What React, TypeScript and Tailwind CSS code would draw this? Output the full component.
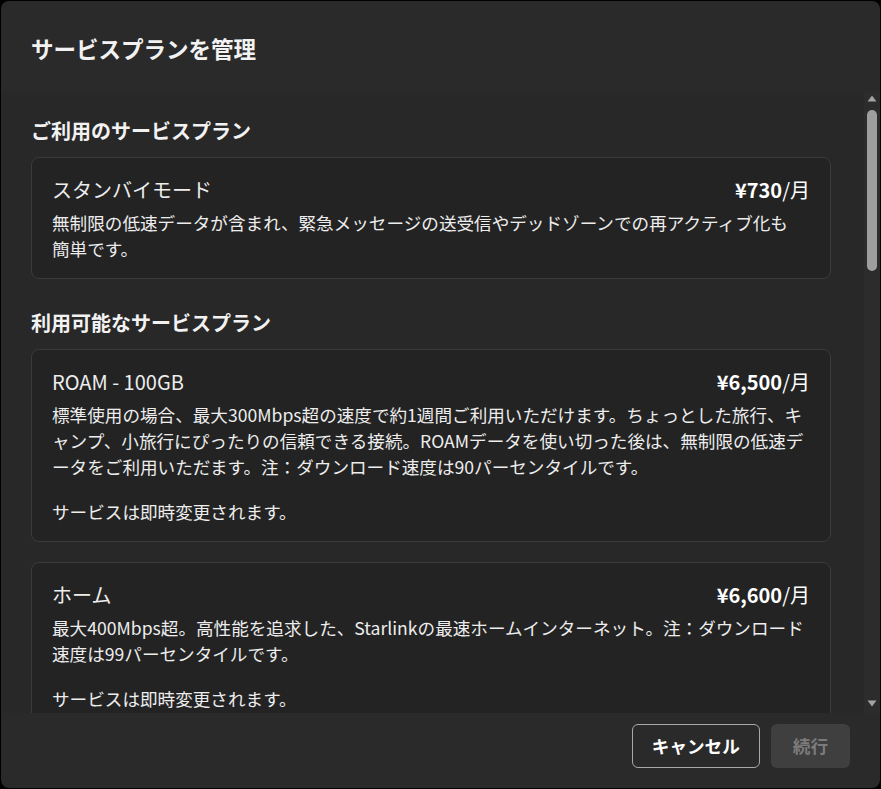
type Plan = {
  name: string;
  price: string;
  description: string;
  note?: string;
};

const currentPlan: Plan = {
  name: "スタンバイモード",
  price: "¥730",
  description: "無制限の低速データが含まれ、緊急メッセージの送受信やデッドゾーンでの再アクティブ化も簡単です。",
};

const availablePlans: Plan[] = [
  {
    name: "ROAM - 100GB",
    price: "¥6,500",
    description:
      "標準使用の場合、最大300Mbps超の速度で約1週間ご利用いただけます。ちょっとした旅行、キャンプ、小旅行にぴったりの信頼できる接続。ROAMデータを使い切った後は、無制限の低速データをご利用いただます。注：ダウンロード速度は90パーセンタイルです。",
    note: "サービスは即時変更されます。",
  },
  {
    name: "ホーム",
    price: "¥6,600",
    description:
      "最大400Mbps超。高性能を追求した、Starlinkの最速ホームインターネット。注：ダウンロード速度は99パーセンタイルです。",
    note: "サービスは即時変更されます。",
  },
];

function PlanCard({ plan }: { plan: Plan }) {
  return (
    <div className="rounded-lg border border-[#3b3b3b] bg-[#232323] px-5 pt-[18px] pb-4 text-[#ededed]">
      <div className="flex items-start justify-between gap-4 text-[20px] leading-[28px]">
        <span>{plan.name}</span>
        <span className="shrink-0 text-white">
          <span className="font-bold">{plan.price}</span>/月
        </span>
      </div>
      <p className="mt-1.5 mr-[6px] text-[17.6px] leading-[26px]">{plan.description}</p>
      {plan.note ? <p className="mt-[19px] text-[17.6px] leading-[26px]">{plan.note}</p> : null}
    </div>
  );
}

function ScrollBar() {
  return (
    <div className="flex w-[16px] shrink-0 flex-col items-center bg-[#2c2c2c] pt-[3px] pb-[6px]">
      <svg width="10" height="7" viewBox="0 0 10 7" className="block">
        <path d="M5 0.5 L9.5 6.5 L0.5 6.5 Z" fill="#a3a3a3" />
      </svg>
      <div className="mt-[8px] h-[161px] w-[10px] rounded-full bg-[#9e9e9e]" />
      <div className="flex-1" />
      <svg width="10" height="7" viewBox="0 0 10 7" className="block">
        <path d="M0.5 0.5 L9.5 0.5 L5 6.5 Z" fill="#a3a3a3" />
      </svg>
    </div>
  );
}

export default function App() {
  return (
    <div className="h-[789px] w-[881px] bg-black p-px [font-family:'Noto_Sans_CJK_JP',sans-serif]">
      <div className="flex h-[787px] w-[879px] flex-col overflow-hidden rounded-lg bg-[#2a2a2a]">
        <h1 className="px-[30px] pt-[33px] text-[22.5px] leading-[28px] font-bold text-[#f2f2f2]">
          サービスプランを管理
        </h1>

        <div className="mt-[30px] flex min-h-0 flex-1">
          <div className="min-w-0 flex-1 overflow-hidden bg-[#282828] pr-[33px] pl-[30px]">
            <h2 className="pt-[25px] text-[20px] leading-[28px] font-bold text-[#f2f2f2]">ご利用のサービスプラン</h2>
            <div className="mt-3">
              <PlanCard plan={currentPlan} />
            </div>

            <h2 className="mt-[30px] text-[20px] leading-[28px] font-bold text-[#f2f2f2]">利用可能なサービスプラン</h2>
            <div className="mt-3 flex flex-col gap-5">
              {availablePlans.map((plan) => (
                <PlanCard key={plan.name} plan={plan} />
              ))}
            </div>
          </div>
          <ScrollBar />
        </div>

        <div className="flex justify-end gap-[11px] pt-[11px] pr-[30px] pb-5">
          <button
            type="button"
            className="h-[44px] rounded-md border border-[#a8a8a8] px-[19px] text-[17.6px] font-bold text-white"
          >
            キャンセル
          </button>
          <button
            type="button"
            disabled
            className="h-[44px] rounded-md bg-[#3f3f3f] px-[22px] text-[17.6px] font-bold text-[#7b7b7b]"
          >
            続行
          </button>
        </div>
      </div>
    </div>
  );
}
